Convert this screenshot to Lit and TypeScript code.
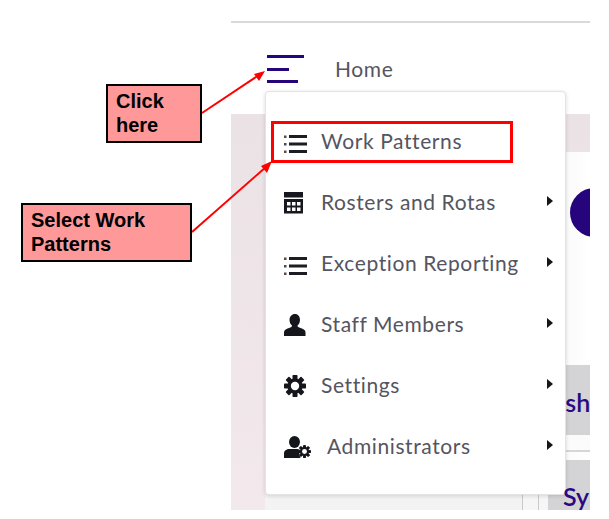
import { LitElement, css, html, svg } from 'lit';
import { customElement } from 'lit/decorators.js';

// eight toothed gear on a 22 box, hole cut by the white circle
const gearTeeth = [0, 45, 90, 135, 180, 225, 270, 315];
const gear = (hole: number) => svg`
  ${gearTeeth.map((a) => svg`<rect x="8.5" y="0" width="5" height="5" rx="0.8" fill="#15151c" transform="rotate(${a} 11 11)" />`)}
  <circle cx="11" cy="11" r="7.600" fill="#15151c" />
  <circle cx="11" cy="11" r="${hole}" fill="#fff" />
`;

const icons = {
  list: html`<svg class="shift" width="23" height="18" viewBox="0 0 23 18">
    <rect x="0" y="0.5" width="2.500" height="2.500" fill="#5a4a44" /><rect x="5" y="0" width="18" height="3" fill="#1c1c24" />
    <rect x="0" y="8" width="2.500" height="2.500" fill="#3f4a60" /><rect x="5" y="7.500" width="18" height="3" fill="#1c1c24" />
    <rect x="0" y="15.500" width="2.500" height="2.500" fill="#5a4a44" /><rect x="5" y="15" width="18" height="3" fill="#1c1c24" />
  </svg>`,
  table: html`<svg width="19" height="22" viewBox="0 0 19 22">
    <rect x="0" y="0" width="19" height="5.500" fill="#17171f" />
    <path fill-rule="evenodd" fill="#17171f" d="M0 7h19v14.500H0z M3 10v3.500h3.500v-3.500z M8 10v3.500h3.500v-3.500z M13 10v3.500h3.500v-3.500z M3 15.500v3.500h3.500v-3.500z M8 15.500v3.500h3.500v-3.500z M13 15.500v3.500h3.500v-3.500z" />
  </svg>`,
  person: html`<svg width="22" height="22" viewBox="0 0 22 22">
    <path fill="#15151c" d="M11 0c3.100 0 5 2.600 5 5.800 0 2.500-1 4.600-2.500 5.700v.6c0 .7 1 1.300 3 1.900 3 .9 5 2 5 4.400V22H0v-3.600c0-2.400 2-3.500 5-4.400 2-.6 3-1.200 3-1.900v-.6C6.500 10.400 5.500 8.300 5.500 5.800 5.500 2.600 7.900 0 11 0z" />
  </svg>`,
  gear: html`<svg width="22" height="22" viewBox="0 0 22 22">${gear(4.2)}</svg>`,
  admin: html`<svg width="27" height="22" viewBox="0 0 27 22">
    <ellipse cx="10.500" cy="6" rx="5.500" ry="6" fill="#15151c" />
    <path fill="#15151c" d="M0 22v-4.500c0-3 2.500-4.500 5.500-4.500h7c1.500 0 2.500.4 3.500 1-1 2.500-.8 5.500.5 8z" />
    <svg x="14" y="9" width="13" height="13" viewBox="0 0 22 22">${gear(4.2)}</svg>
  </svg>`,
};

const items = [
  { label: 'Work Patterns', icon: icons.list, sub: false },
  { label: 'Rosters and Rotas', icon: icons.table, sub: true },
  { label: 'Exception Reporting', icon: icons.list, sub: true },
  { label: 'Staff Members', icon: icons.person, sub: true },
  { label: 'Settings', icon: icons.gear, sub: true },
  { label: 'Administrators', icon: icons.admin, sub: true, wide: true },
];

@customElement('app-root')
export class AppRoot extends LitElement {
  static styles = css`
    :host {
      display: block;
      position: relative;
      width: 609px;
      height: 519px;
      background: #fff;
      overflow: hidden;
      font-family: Lato, 'Noto Sans', sans-serif;
    }

    .shot {
      position: relative;
      margin-left: 231px;
      width: 359px;
      height: 510px;
      display: flex;
      flex-direction: column;
      overflow: hidden;
    }

    .nav {
      height: 93px;
      margin-top: 21px;
      border-top: 2px solid #d9d9d9;
      flex: none;
      display: flex;
      align-items: flex-start;
      box-sizing: border-box;
    }

    .burger {
      margin: 32px 0 0 36px;
      width: 38px;
      display: flex;
      flex-direction: column;
      gap: 9.5px;
    }

    .burger span {
      display: block;
      height: 3px;
      background: #26047c;
    }

    .burger .b1 { width: 37px; }
    .burger .b2 { width: 22px; }
    .burger .b3 { width: 31px; }

    .home {
      margin: 33px 0 0 30px;
      font-size: 21px;
      line-height: 26px;
      letter-spacing: 0.6px;
      color: #55555f;
    }

    .body {
      flex: 1;
      display: flex;
      flex-direction: column;
      background: linear-gradient(#ebe2e6, #f3e9ed);
    }

    .band {
      height: 38px;
      flex: none;
    }

    .main {
      flex: 1;
      margin-left: 34px;
      background: linear-gradient(90deg, #f3f3f3 80%, #fff);
      display: flex;
      flex-direction: column;
      align-items: flex-end;
    }

    .avatar {
      flex: none;
      width: 49px;
      height: 49px;
      margin: 36px -29px 0 0;
      border-radius: 50%;
      background: #26047c;
    }

    .card {
      background: #d4d4d6;
      color: #2b0a80;
      font-size: 25px;
      font-weight: 600;
      white-space: nowrap;
      overflow: hidden;
    }

    .dash {
      align-self: stretch;
      margin-left: 283px;
      margin-top: 128px;
      height: 70px;
      box-sizing: border-box;
      padding-top: 21px;
      line-height: 32px;
      text-indent: -14px;
    }

    .gap {
      align-self: stretch;
      height: 15px;
      margin-left: 250px;
      background: #fbfbfb;
      border-bottom: 2px solid #d6d6d6;
    }

    .lower {
      align-self: stretch;
      flex: 1;
      margin: 8px 0 0 257px;
      display: flex;
    }

    .cell {
      flex: none;
      box-sizing: border-box;
      border-left: 1px solid #c9c9c9;
      background: #f6f6f6;
    }

    .cell.c1 { width: 16px; }
    .cell.c2 { width: 10px; }

    .sys {
      flex: 1;
      overflow: visible;
      line-height: 30px;
      padding: 21px 0 0 15px;
      box-sizing: border-box;
    }

    .sys span {
      position: relative;
      z-index: 2;
    }

    .menu {
      position: absolute;
      left: 34px;
      top: 91px;
      width: 301px;
      height: 404px;
      box-sizing: border-box;
      padding-top: 19px;
      background: #fff;
      border: 1px solid #e3e3e3;
      border-radius: 4px;
      box-shadow: 0 1px 4px rgba(0, 0, 0, 0.14);
      display: flex;
      flex-direction: column;
      z-index: 1;
    }

    .row {
      height: 61px;
      flex: none;
      display: flex;
      align-items: center;
      padding-left: 18px;
      color: #55555f;
      font-size: 21px;
      letter-spacing: 0.6px;
      white-space: nowrap;
    }

    .label {
      margin-bottom: 2px;
    }

    .icon {
      width: 37px;
      flex: none;
      display: flex;
      align-items: center;
    }

    .icon.wide {
      width: 43px;
    }

    .shift {
      margin-top: 5px;
    }

    .caret {
      position: absolute;
      left: 281px;
      width: 0;
      height: 0;
      margin-top: -3px;
      border-left: 6px solid #15151c;
      border-top: 5px solid transparent;
      border-bottom: 5px solid transparent;
    }

    .annotations {
      position: absolute;
      left: 0;
      top: 0;
      z-index: 3;
    }

    .note {
      position: absolute;
      box-sizing: border-box;
      height: 59px;
      padding: 3px 0 0 8px;
      background: #ff9999;
      border: 2px solid #000;
      font-family: 'Liberation Sans', Arial, sans-serif;
      font-size: 20px;
      font-weight: 700;
      line-height: 24px;
      color: #000;
      z-index: 3;
    }

    .note.click {
      left: 106px;
      top: 84px;
      width: 96px;
    }

    .note.select {
      left: 21px;
      top: 203px;
      width: 171px;
    }

    .highlight {
      position: absolute;
      left: 271px;
      top: 121px;
      width: 242px;
      height: 42px;
      box-sizing: border-box;
      border: 3px solid #ff0000;
      z-index: 3;
    }
  `;

  render() {
    return html`
      <div class="shot">
        <div class="nav">
          <div class="burger">
            <span class="b1"></span><span class="b2"></span><span class="b3"></span>
          </div>
          <div class="home">Home</div>
        </div>
        <div class="body">
          <div class="band"></div>
          <div class="main">
            <div class="avatar"></div>
            <div class="card dash">Dash</div>
            <div class="gap"></div>
            <div class="lower">
              <div class="cell c1"></div>
              <div class="cell c2"></div>
              <div class="card sys"><span>Sy</span></div>
            </div>
          </div>
        </div>
        <div class="menu">
          ${items.map(
            (item) => html`
              <div class="row">
                <span class="icon ${item.wide ? 'wide' : ''}">${item.icon}</span>
                <span class="label">${item.label}</span>
                ${item.sub ? html`<span class="caret"></span>` : ''}
              </div>
            `
          )}
        </div>
      </div>

      <svg class="annotations" width="609" height="519" viewBox="0 0 609 519">
        <line x1="202" y1="113" x2="259" y2="75" stroke="#ff0000" stroke-width="2" />
        <path d="M265 71 L254 74 L259 81 Z" fill="#ff0000" />
        <line x1="192" y1="232" x2="266" y2="167" stroke="#ff0000" stroke-width="2" />
        <path d="M272 161 L261 166 L267 173 Z" fill="#ff0000" />
      </svg>
      <div class="highlight"></div>
      <div class="note click">Click here</div>
      <div class="note select">Select Work Patterns</div>
    `;
  }
}
